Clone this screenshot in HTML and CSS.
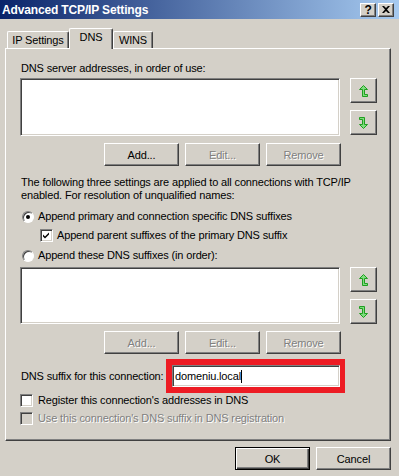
FILE: index.html
```html
<!DOCTYPE html>
<html lang="en">
<head>
  <meta charset="UTF-8">
  <title>Advanced TCP/IP Settings</title>
  <link rel="stylesheet" href="styles.css">
</head>
<body>
  <div class="titlebar">
    <span class="title">Advanced TCP/IP Settings</span>
    <div class="caption-buttons">
      <span class="cap-btn help">?</span>
      <span class="cap-btn close">
        <svg width="8" height="7" viewBox="0 0 8 7"><path d="M0 0h2l2 2 2-2h2L5 3.5 8 7H6L4 5 2 7H0l3-3.5z" fill="#000"/></svg>
      </span>
    </div>
  </div>

  <div class="tabs">
    <div class="tab tab-ip">IP Settings</div>
    <div class="tab tab-dns active">DNS</div>
    <div class="tab tab-wins">WINS</div>
  </div>

  <div class="panel">
    <div class="label first">DNS server addresses, in order of use:</div>
    <div class="list-row">
      <div class="listbox"></div>
      <div class="move-buttons">
        <button class="btn move"><svg width="9" height="12" viewBox="0 0 9 12"><path class="arrow" d="M4.5 0.5L8.5 4.5H5.5V9.5H8.5V11.5H3.5V4.5H0.5Z"/></svg></button>
        <button class="btn move"><svg width="9" height="12" viewBox="0 0 9 12"><path class="arrow" transform="rotate(180 4.5 6)" d="M4.5 0.5L8.5 4.5H5.5V9.5H8.5V11.5H3.5V4.5H0.5Z"/></svg></button>
      </div>
    </div>
    <div class="btn-row">
      <button class="btn">Add...</button>
      <button class="btn disabled">Edit...</button>
      <button class="btn disabled">Remove</button>
    </div>

    <div class="note">The following three settings are applied to all connections with TCP/IP<br>enabled. For resolution of unqualified names:</div>

    <div class="option radio-row first-radio">
      <span class="radio checked"></span>
      <span>Append primary and connection specific DNS suffixes</span>
    </div>
    <div class="option check-row nested">
      <span class="checkbox"><svg width="9" height="9" viewBox="0 0 9 9"><path d="M1 3.5l2 2 4-4v2l-4 4-2-2z" fill="#000"/></svg></span>
      <span>Append parent suffixes of the primary DNS suffix</span>
    </div>
    <div class="option radio-row second-radio">
      <span class="radio"></span>
      <span>Append these DNS suffixes (in order):</span>
    </div>

    <div class="list-row second-list">
      <div class="listbox"></div>
      <div class="move-buttons">
        <button class="btn move"><svg width="9" height="12" viewBox="0 0 9 12"><path class="arrow" d="M4.5 0.5L8.5 4.5H5.5V9.5H8.5V11.5H3.5V4.5H0.5Z"/></svg></button>
        <button class="btn move"><svg width="9" height="12" viewBox="0 0 9 12"><path class="arrow" transform="rotate(180 4.5 6)" d="M4.5 0.5L8.5 4.5H5.5V9.5H8.5V11.5H3.5V4.5H0.5Z"/></svg></button>
      </div>
    </div>
    <div class="btn-row">
      <button class="btn disabled">Add...</button>
      <button class="btn disabled">Edit...</button>
      <button class="btn disabled">Remove</button>
    </div>

    <div class="suffix-row">
      <span class="suffix-label">DNS suffix for this connection:</span>
      <div class="highlight">
        <div class="textbox">domeniu.local<span class="caret"></span></div>
      </div>
    </div>

    <div class="option check-row register">
      <span class="checkbox"></span>
      <span>Register this connection's addresses in DNS</span>
    </div>
    <div class="option check-row use-suffix disabled">
      <span class="checkbox off"></span>
      <span>Use this connection's DNS suffix in DNS registration</span>
    </div>
  </div>

  <div class="dialog-buttons">
    <button class="btn default">OK</button>
    <button class="btn">Cancel</button>
  </div>
</body>
</html>
```

FILE: styles.css
```css
body {
  margin: 0;
  width: 399px;
  height: 476px;
  overflow: hidden;
  background: #d4d0c8;
  font-family: "Liberation Sans", Arial, sans-serif;
  font-size: 11px;
  letter-spacing: -0.15px;
  color: #000;
}
* {
  box-sizing: border-box;
}

/* title bar */
.titlebar {
  height: 19px;
  display: flex;
  align-items: center;
  justify-content: space-between;
  padding: 0 5px 0 2px;
  background: linear-gradient(to right, #0a246a, #a6caf0);
}
.title {
  color: #fff;
  font-weight: bold;
  font-size: 12px;
}
.caption-buttons {
  display: flex;
  gap: 2px;
}
.cap-btn {
  width: 16px;
  height: 14px;
  display: flex;
  align-items: center;
  justify-content: center;
  background: #d4d0c8;
  border: 1px solid;
  border-color: #fff #404040 #404040 #fff;
  box-shadow: inset -1px -1px #808080;
  font-weight: bold;
  font-size: 12px;
}

/* tabs */
.tabs {
  height: 29px;
  display: flex;
  align-items: flex-end;
  padding-left: 7px;
}
.tab {
  height: 17px;
  line-height: 16px;
  text-align: center;
  border-top: 1px solid #fff;
  border-left: 1px solid #fff;
  border-right: 1px solid #404040;
  border-radius: 2px 2px 0 0;
  box-shadow: inset -1px 0 #808080;
}
.tab-ip { width: 62px; }
.tab-dns { width: 44px; }
.tab-wins { width: 40px; }
.tab.active {
  position: relative;
  z-index: 1;
  height: 21px;
  margin-bottom: -1px;
  background: #d4d0c8;
}

/* tab page */
.panel {
  margin-left: 5px;
  width: 386px;
  height: 393px;
  padding-left: 14px;
  border: 1px solid;
  border-color: #fff #404040 #404040 #fff;
  box-shadow: inset -1px -1px #808080;
}
.label, .note, .option {
  line-height: 13px;
}
.label.first {
  margin-top: 13px;
  padding-left: 1px;
}
.list-row {
  display: flex;
  margin-top: 3px;
}
.list-row.second-list {
  margin-top: 5px;
}
.listbox {
  width: 320px;
  height: 58px;
  margin-right: 10px;
  background: #fff;
  border: 1px solid;
  border-color: #808080 #fff #fff #808080;
  box-shadow: inset 1px 1px #404040, inset -1px -1px #d4d0c8;
}
.second-list .listbox {
  height: 57px;
}
.move-buttons {
  display: flex;
  flex-direction: column;
  gap: 7px;
}
.btn {
  width: 75px;
  height: 23px;
  padding: 0;
  background: #d4d0c8;
  border: 1px solid;
  border-color: #fff #404040 #404040 #fff;
  box-shadow: inset -1px -1px #808080;
  font-family: inherit;
  font-size: 11px;
  letter-spacing: -0.15px;
  color: #000;
}
.btn.move {
  width: 27px;
  height: 25px;
  display: flex;
  align-items: center;
  justify-content: center;
}
.arrow {
  fill: #7fdc7f;
  stroke: #1f9f1f;
  stroke-width: 1;
}
.btn.disabled, .option.disabled {
  color: #808080;
  text-shadow: 1px 1px #fff;
}
.btn.default {
  border: 1px solid #000;
  box-shadow: inset 1px 1px #fff, inset -1px -1px #404040, inset -2px -2px #808080;
}
.btn-row {
  width: 321px;
  display: flex;
  justify-content: flex-end;
  gap: 6px;
  margin-top: 7px;
}
.note {
  margin-top: 10px;
  padding-left: 1px;
  white-space: nowrap;
}

/* options */
.option {
  height: 13px;
  display: flex;
  align-items: center;
  white-space: nowrap;
}
.radio-row { gap: 4px; }
.first-radio { margin-top: 8px; }
.second-radio { margin-top: 7px; }
.radio {
  width: 12px;
  height: 12px;
  margin-left: 2px;
  border-radius: 50%;
  background: #fff;
  border: 1px solid;
  border-color: #808080 #fff #fff #808080;
  box-shadow: inset 1px 1px #404040;
  display: flex;
  align-items: center;
  justify-content: center;
}
.radio.checked::after {
  content: "";
  width: 4px;
  height: 4px;
  border-radius: 50%;
  background: #000;
}
.check-row { gap: 4px; }
.nested {
  margin-top: 6px;
  padding-left: 20px;
}
.checkbox {
  width: 13px;
  height: 13px;
  flex: none;
  background: #fff;
  border: 1px solid;
  border-color: #808080 #fff #fff #808080;
  box-shadow: inset 1px 1px #404040, inset -1px -1px #d4d0c8;
  display: flex;
  align-items: center;
  justify-content: center;
}
.checkbox.off {
  background: #d4d0c8;
}
.register {
  margin-top: 1px;
  gap: 5px;
}
.use-suffix {
  margin-top: 5px;
  gap: 5px;
}

/* connection suffix */
.suffix-row {
  display: flex;
  align-items: center;
  margin-top: 5px;
}
.suffix-label {
  width: 146px;
  flex: none;
  padding-left: 1px;
}
.highlight {
  width: 179px;
  height: 34px;
  border-style: solid;
  border-color: #ed1c24;
  border-width: 6px 5px 6px 6px;
}
.textbox {
  height: 22px;
  padding-left: 2px;
  display: flex;
  align-items: center;
  background: #fff;
  border: 1px solid;
  border-color: #808080 #fff #fff #808080;
  box-shadow: inset 1px 1px #404040, inset -1px -1px #d4d0c8;
}
.caret {
  width: 1px;
  height: 13px;
  background: #000;
}

/* OK / Cancel */
.dialog-buttons {
  display: flex;
  justify-content: flex-end;
  gap: 6px;
  margin-top: 6px;
  padding-right: 8px;
}
```
